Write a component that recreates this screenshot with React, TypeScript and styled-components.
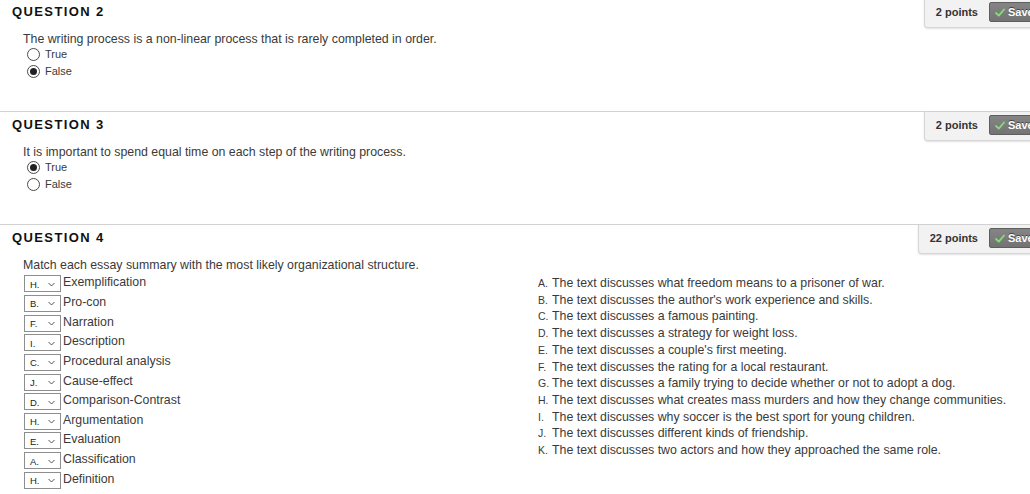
import styled, { createGlobalStyle } from 'styled-components'

const GlobalStyle = createGlobalStyle`
  html, body {
    margin: 0;
    padding: 0;
    background: #fff;
    overflow: hidden;
  }
  body {
    font-family: 'Liberation Sans', Arial, sans-serif;
    color: #3a3a3a;
  }
`

type Option = { label: string; checked: boolean }

const trueFalse = (answer: boolean): Option[] => [
  { label: 'True', checked: answer },
  { label: 'False', checked: !answer },
]

const pairs = [
  ['H.', 'Exemplification'],
  ['B.', 'Pro-con'],
  ['F.', 'Narration'],
  ['I.', 'Description'],
  ['C.', 'Procedural analysis'],
  ['J.', 'Cause-effect'],
  ['D.', 'Comparison-Contrast'],
  ['H.', 'Argumentation'],
  ['E.', 'Evaluation'],
  ['A.', 'Classification'],
  ['H.', 'Definition'],
]

const answers = [
  ['A.', 'The text discusses what freedom means to a prisoner of war.'],
  ['B.', "The text discusses the author's work experience and skills."],
  ['C.', 'The text discusses a famous painting.'],
  ['D.', 'The text discusses a strategy for weight loss.'],
  ['E.', "The text discusses a couple's first meeting."],
  ['F.', 'The text discusses the rating for a local restaurant.'],
  ['G.', 'The text discusses a family trying to decide whether or not to adopt a dog.'],
  ['H.', 'The text discusses what creates mass murders and how they change communities.'],
  ['I.', 'The text discusses why soccer is the best sport for young children.'],
  ['J.', 'The text discusses different kinds of friendship.'],
  ['K.', 'The text discusses two actors and how they approached the same role.'],
]

const Check = () => (
  <svg width="10" height="9" viewBox="0 0 10 9">
    <path d="M1 5 L3.8 7.6 L9 1.5" fill="none" stroke="#86dc7a" strokeWidth="1.8" strokeLinecap="round" strokeLinejoin="round" />
  </svg>
)

const Chevron = () => (
  <svg width="7" height="5" viewBox="0 0 7 5">
    <path d="M0.5 1 L3.5 4 L6.5 1" fill="none" stroke="#555" strokeWidth="1" />
  </svg>
)

const Header = ({ number, points }: { number: number; points: number }) => (
  <HeaderRow>
    <Heading>QUESTION {number}</Heading>
    <PointsBox>
      <Points>{points} points</Points>
      <SaveButton>
        <Check />
        <span>Save Answer</span>
      </SaveButton>
    </PointsBox>
  </HeaderRow>
)

const TrueFalse = ({ number, text, answer }: { number: number; text: string; answer: boolean }) => (
  <Section>
    <Header number={number} points={2} />
    <Prompt>{text}</Prompt>
    <Options>
      {trueFalse(answer).map((o) => (
        <RadioRow key={o.label}>
          <Radio $checked={o.checked} />
          <RadioLabel>{o.label}</RadioLabel>
        </RadioRow>
      ))}
    </Options>
  </Section>
)

export default function App() {
  return (
    <Page>
      <GlobalStyle />
      <TrueFalse
        number={2}
        text="The writing process is a non-linear process that is rarely completed in order."
        answer={false}
      />
      <TrueFalse
        number={3}
        text="It is important to spend equal time on each step of the writing process."
        answer={true}
      />
      <Section>
        <Header number={4} points={22} />
        <Prompt>Match each essay summary with the most likely organizational structure.</Prompt>
        <MatchGrid>
          <div>
            {pairs.map(([letter, term], i) => (
              <PairRow key={i}>
                <SelectBox>
                  <span>{letter}</span>
                  <Chevron />
                </SelectBox>
                <Term>{term}</Term>
              </PairRow>
            ))}
          </div>
          <AnswerList>
            {answers.map(([letter, text]) => (
              <AnswerItem key={letter}>
                <AnswerLetter>{letter}</AnswerLetter>
                {text}
              </AnswerItem>
            ))}
          </AnswerList>
        </MatchGrid>
      </Section>
    </Page>
  )
}

const Page = styled.div`
  width: 1094px;
  margin-top: -2px;
`

const Section = styled.section`
  border-top: 1px solid #d2d2d2;
  padding-bottom: 32px;
`

const HeaderRow = styled.div`
  display: flex;
  justify-content: space-between;
  align-items: flex-start;
  height: 29px;
`

const Heading = styled.h2`
  margin: 0;
  padding: 5px 0 0 12px;
  font-size: 13px;
  line-height: 16px;
  font-weight: bold;
  letter-spacing: 1.4px;
  color: #111;
`

const PointsBox = styled.div`
  box-sizing: border-box;
  height: 29px;
  display: flex;
  align-items: flex-start;
  padding: 3px 8px 0 11px;
  background: #f2f2f2;
  border: 1px solid #d6d6d6;
  border-top: none;
  border-bottom-left-radius: 4px;
  box-shadow: 0 1px 2px rgba(0, 0, 0, 0.12);
`

const Points = styled.span`
  font-size: 11px;
  font-weight: bold;
  line-height: 20px;
  color: #333;
  margin-right: 11px;
`

const SaveButton = styled.div`
  box-sizing: border-box;
  width: 96px;
  height: 20px;
  display: flex;
  align-items: center;
  gap: 3px;
  padding: 0 0 0 5px;
  background: linear-gradient(#858585, #737373);
  border: 1px solid #5e5e5e;
  border-radius: 2px;
  font-size: 11px;
  font-weight: bold;
  color: #fff;
  text-shadow: 0 -1px 0 #444;
`

const Prompt = styled.p`
  margin: 4px 0 0 23px;
  font-size: 12.35px;
  line-height: 14px;
`

const Options = styled.div`
  margin-top: -1px;
`

const RadioRow = styled.div`
  display: flex;
  align-items: center;
  height: 17px;
  padding-left: 27px;
`

const Radio = styled.span<{ $checked: boolean }>`
  box-sizing: border-box;
  width: 13px;
  height: 13px;
  border-radius: 50%;
  border: 1px solid #4a4a4a;
  background: #fff;
  display: flex;
  align-items: center;
  justify-content: center;
  margin-right: 5px;
  margin-top: 2px;
  &::after {
    content: '';
    display: ${(p) => (p.$checked ? 'block' : 'none')};
    width: 7px;
    height: 7px;
    border-radius: 50%;
    background: #222;
  }
`

const RadioLabel = styled.span`
  font-size: 11px;
  line-height: 14px;
`

const MatchGrid = styled.div`
  display: grid;
  grid-template-columns: 514px 1fr;
  padding-left: 24px;
  margin-top: 2px;
`

const PairRow = styled.div`
  display: flex;
  align-items: center;
  height: 19.65px;
`

const SelectBox = styled.div`
  box-sizing: border-box;
  width: 37px;
  height: 17px;
  display: flex;
  align-items: center;
  justify-content: space-between;
  padding: 1px 5px 0 5px;
  border: 1px solid #8e8e8e;
  background: #fff;
  font-size: 9.5px;
  color: #222;
  margin-right: 2px;
`

const Term = styled.span`
  font-size: 12.35px;
  line-height: 14px;
  margin-top: -3px;
`

const AnswerList = styled.div`
  padding-top: 1px;
`

const AnswerItem = styled.div`
  font-size: 12.35px;
  line-height: 16.7px;
  white-space: nowrap;
`

const AnswerLetter = styled.span`
  display: inline-block;
  width: 14px;
  font-size: 10.5px;
`
